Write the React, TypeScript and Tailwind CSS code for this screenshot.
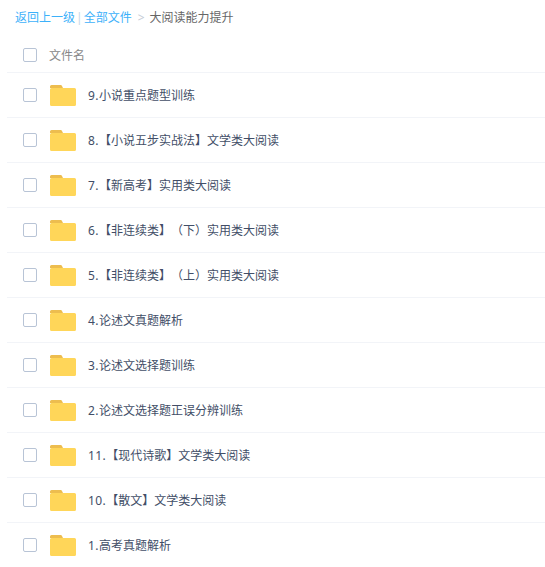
const rows = [
  ["9.", "小说重点题型训练"],
  ["8.", "【小说五步实战法】文学类大阅读"],
  ["7.", "【新高考】实用类大阅读"],
  ["6.", "【非连续类】（下）实用类大阅读"],
  ["5.", "【非连续类】（上）实用类大阅读"],
  ["4.", "论述文真题解析"],
  ["3.", "论述文选择题训练"],
  ["2.", "论述文选择题正误分辨训练"],
  ["11.", "【现代诗歌】文学类大阅读"],
  ["10.", "【散文】文学类大阅读"],
  ["1.", "高考真题解析"],
];

function Folder() {
  return (
    <svg width="26" height="21" viewBox="0 0 26 21" className="block shrink-0">
      <path d="M0 1.5A1.5 1.5 0 0 1 1.5 0H10.5A1.5 1.5 0 0 1 12 1L13 3H0Z" fill="#edbd4f" />
      <path d="M0 4.5A1.5 1.5 0 0 1 1.5 3H24.5A1.5 1.5 0 0 1 26 4.5V19.5A1.5 1.5 0 0 1 24.5 21H1.5A1.5 1.5 0 0 1 0 19.5Z" fill="#ffd659" />
    </svg>
  );
}

function Check() {
  return <span className="block h-[14px] w-[14px] shrink-0 rounded-[2px] border border-[#b8c4d6] bg-white" />;
}

export default function App() {
  return (
    <div className="h-[567px] w-[545px] overflow-hidden bg-white text-[12px] font-['Noto_Sans','Noto_Sans_CJK_SC',sans-serif] [text-spacing-trim:space-all]">
      <div className="flex h-[35px] items-center pl-[15px] pt-[1px]">
        <span className="text-[#3db1fa]">返回上一级</span>
        <span className="mx-[1px] text-[#c5d6e6]">|</span>
        <span className="text-[#3db1fa]">全部文件</span>
        <span className="ml-[6px] mr-[5px] text-[#c4ccd6]">&gt;</span>
        <span className="text-[#666]">大阅读能力提升</span>
      </div>
      <div className="ml-[7px]">
        <div className="flex h-[38px] items-center gap-[12px] border-b border-[#f2f4f8] pl-[16px] pt-[3px]">
          <Check />
          <span className="pt-[2px] text-[#888]">文件名</span>
        </div>
        {rows.map(([n, r]) => (
          <div key={n} className="flex h-[45px] items-center border-b border-[#f2f4f8] pl-[16px]">
            <Check />
            <span className="ml-[13px]"><Folder /></span>
            <span className="ml-[12px] pt-[2px] text-[#424e67]">
              <span className="tracking-[0.4px]">{n}</span>
              {r}
            </span>
          </div>
        ))}
      </div>
    </div>
  );
}
